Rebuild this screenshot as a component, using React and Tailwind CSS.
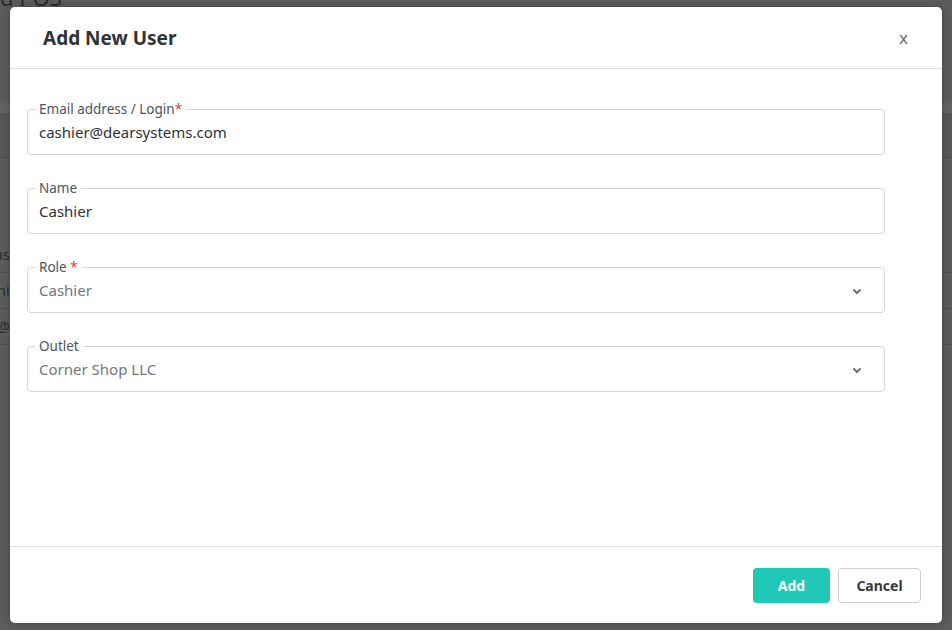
import React from 'react';

const font = { fontFamily: '"Noto Sans", "Liberation Sans", sans-serif' };

// outlined field with the label sitting in the notch of the top border
const Field = ({ label, required, value, muted, select }) => (
  <div className="relative h-[46px] w-[858px] rounded-[4px] border border-[#d6d7dc] bg-white">
    <span className="absolute left-[7px] top-[-10px] bg-white px-[4px] text-[13.5px] leading-[18px] text-[#4b5560]">
      {label}
      {required && <span className="text-[#e0393e]">*</span>}
    </span>
    <div className="flex h-full items-center justify-between pl-[11px] pr-[22px] pt-[1px]">
      <span className={`text-[15px] ${muted ? 'text-[#6f7780]' : 'text-[#2d3237]'}`}>{value}</span>
      {select && (
        <svg width="10" height="7" viewBox="0 0 10 7" className="mt-[1px]">
          <path d="M1.5 1.5 L5 5 L8.5 1.5" fill="none" stroke="#6b6f75" strokeWidth="2" />
        </svg>
      )}
    </div>
  </div>
);

// a row of the dimmed table; only its last letters peek out left of the modal
const BgRow = ({ text }) => (
  <div className="flex h-[36px] items-center border-b border-[#4f4f4f]">
    <div className="flex w-[10px] justify-end overflow-hidden text-[15px] text-[#2c2c2c]">
      <span className="whitespace-nowrap">{text}</span>
    </div>
  </div>
);

const App = () => {
  return (
    <div className="relative h-[630px] w-[952px] overflow-hidden bg-[#5c5c5c]" style={font}>
      {/* dimmed page behind the modal */}
      <div>
        <div className="mt-[-15px] h-[24px] text-[22px] leading-[24px] text-[#2a2a2a]">d POS</div>
        <div className="h-[94px]" />
        <div className="h-[12px] border-b border-[#4b4b4b] bg-[#626262]" />
        <div className="h-[43px] border-b border-[#4b4b4b] bg-[#585858]" />
        <div className="h-[79px] border-b border-[#555]" />
        <BgRow text="Status" />
        <BgRow text="Cashi" />
        <BgRow text="cashi@" />
      </div>

      {/* modal */}
      <div className="absolute left-[10px] top-[7px] flex h-[616px] w-[932px] flex-col rounded-[5px] bg-white shadow-[0_0_8px_rgba(0,0,0,0.25)]">
        <div className="flex h-[62px] shrink-0 items-center justify-between border-b border-[#dcdde2] pl-[33px] pr-[34px] pt-[1px]">
          <h2 className="text-[19px] font-bold text-[#2f3236]">Add New User</h2>
          <span className="text-[17px] text-[#6a6e73]">x</span>
        </div>

        <div className="flex flex-1 flex-col gap-[33px] pl-[17px] pt-[40px]">
          <Field label="Email address / Login" required value="cashier@dearsystems.com" />
          <Field label="Name" value="Cashier" />
          <Field label="Role " required value="Cashier" muted select />
          <Field label="Outlet" value="Corner Shop LLC" muted select />
        </div>

        <div className="flex h-[77px] shrink-0 items-center justify-end gap-[8px] border-t border-[#dcdde2] pr-[21px]">
          <button className="h-[35px] w-[77px] rounded-[4px] bg-[#1fc8b7] text-[14px] font-bold text-white">Add</button>
          <button className="h-[35px] w-[83px] rounded-[4px] border border-[#cfd0d4] bg-white text-[14px] font-bold text-[#36393d]">
            Cancel
          </button>
        </div>
      </div>
    </div>
  );
};

export default App;
